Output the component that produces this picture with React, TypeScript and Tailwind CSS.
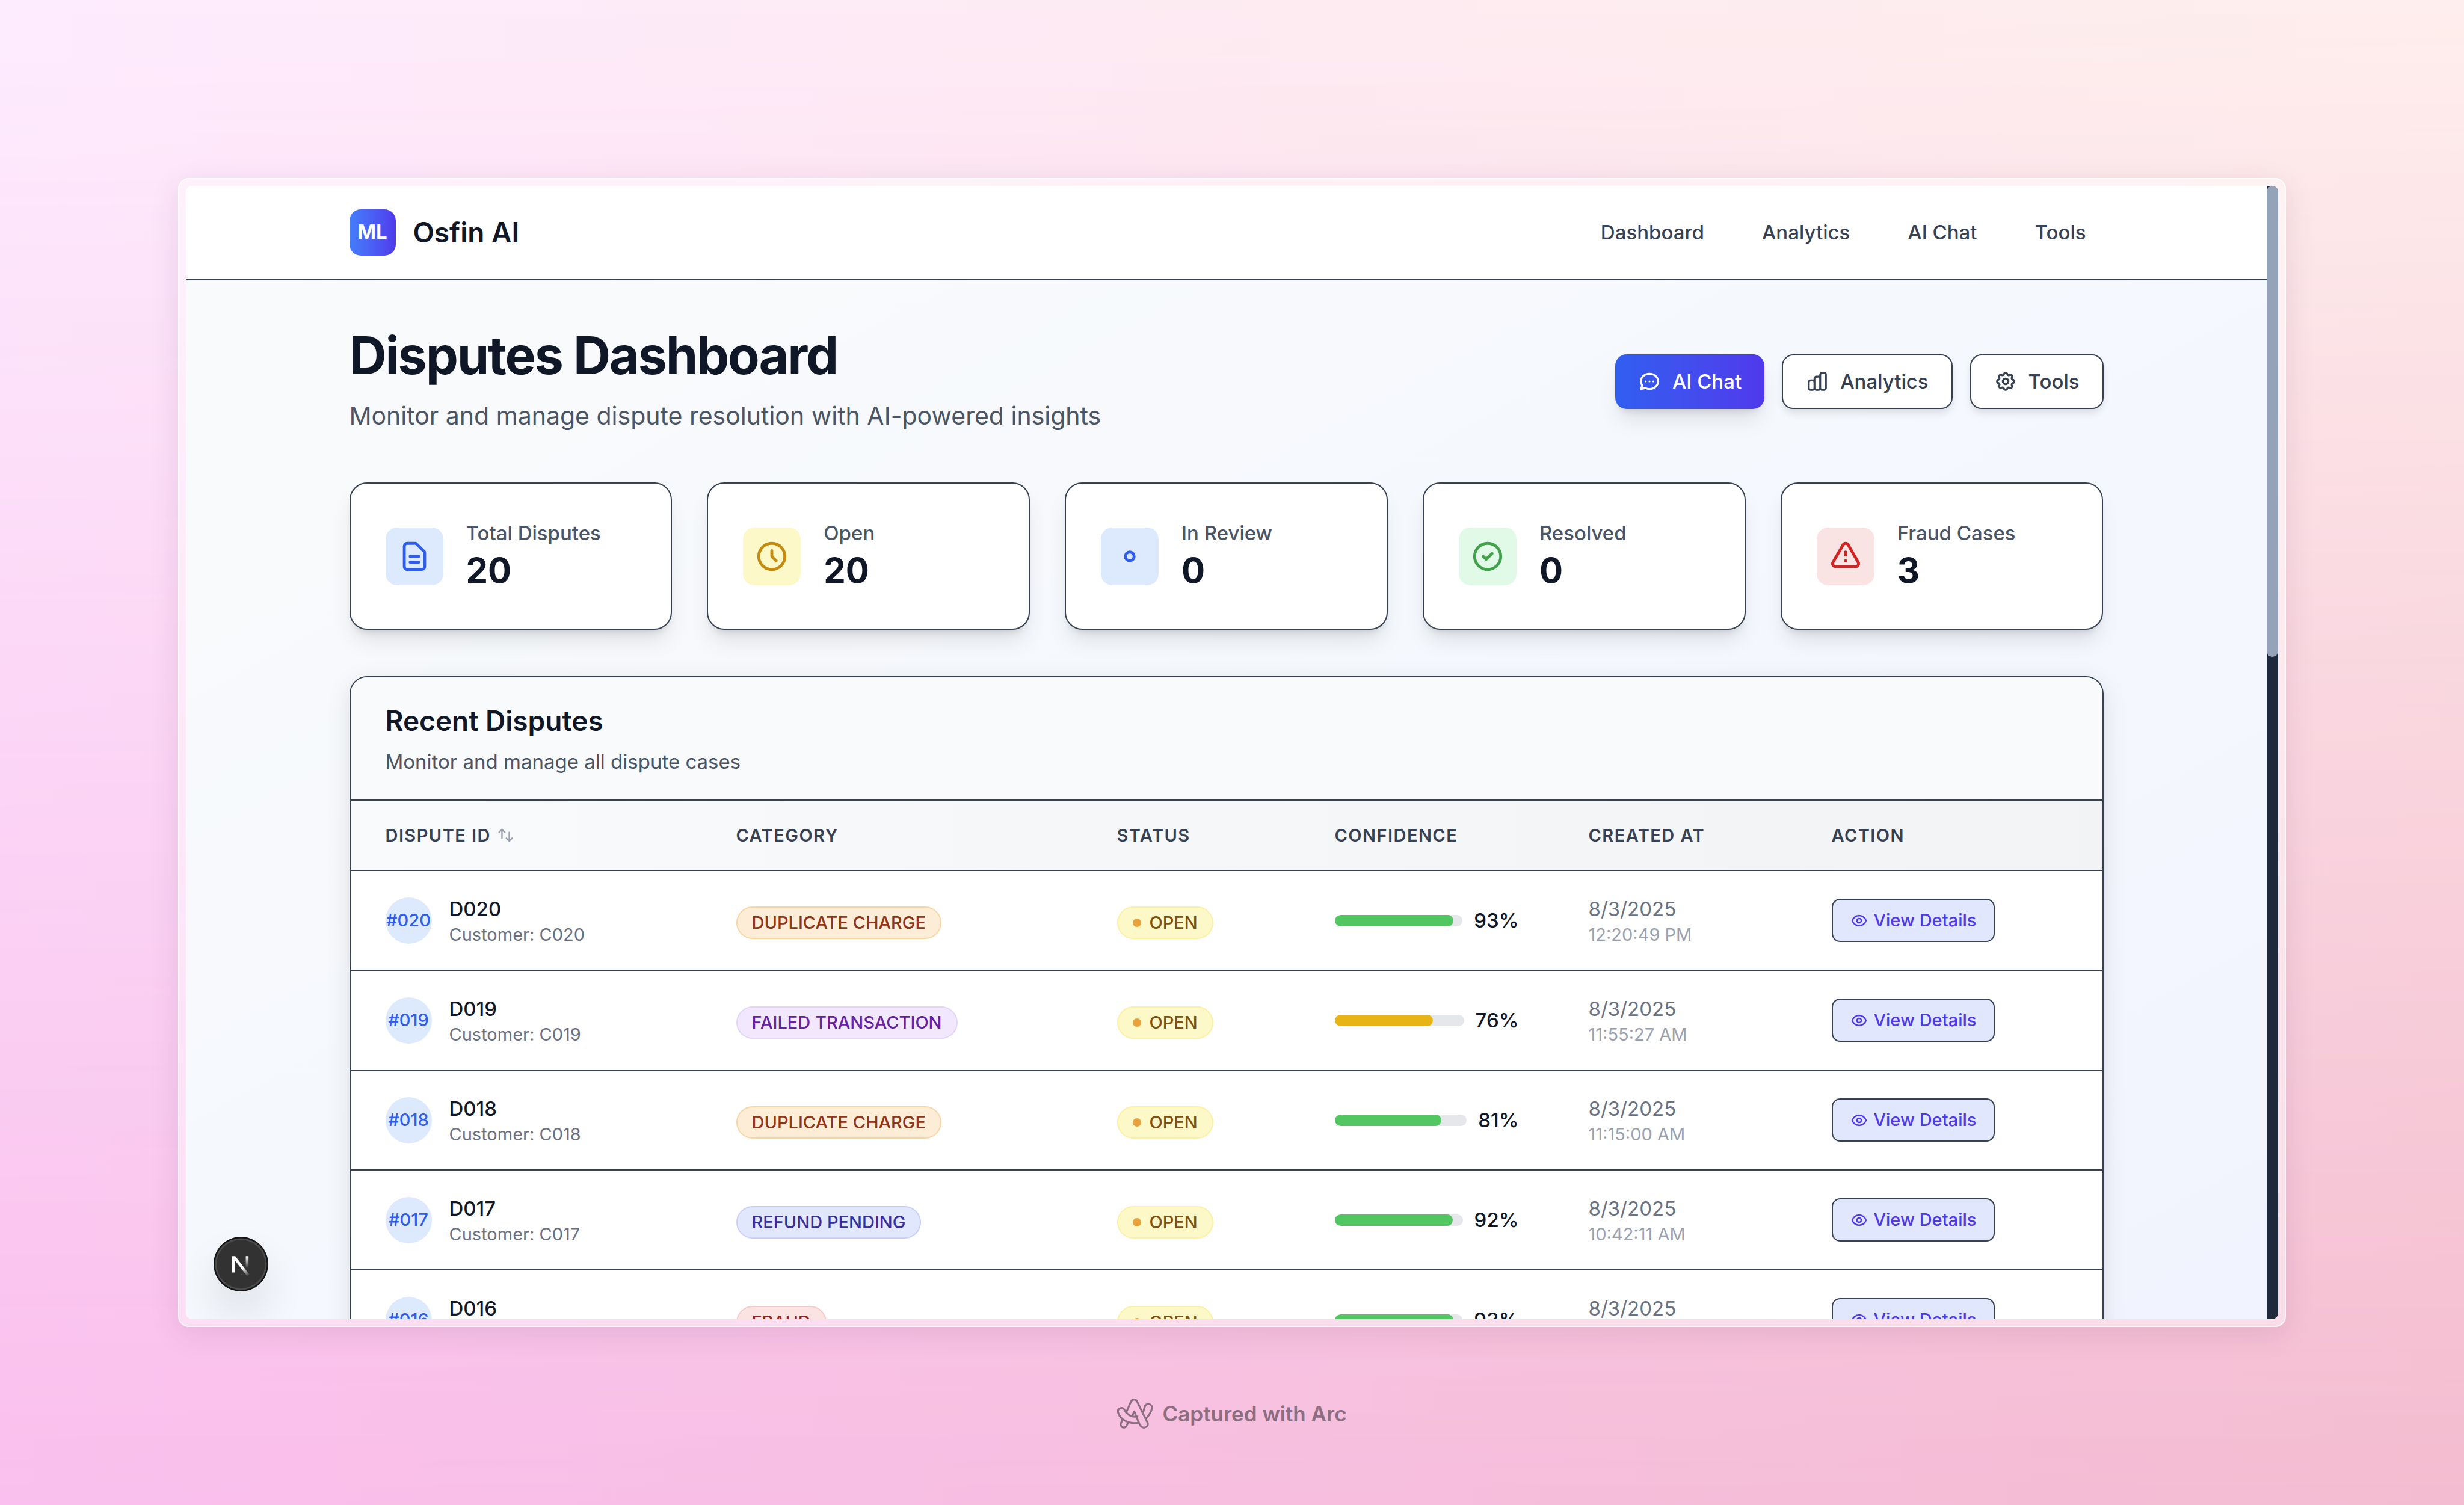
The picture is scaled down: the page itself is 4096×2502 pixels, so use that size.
import type { ReactNode } from "react";

const PATHS = {
  chat: "M8 12h.01M12 12h.01M16 12h.01M21 12c0 4.418-4.03 8-9 8a9.863 9.863 0 01-4.255-.949L3 20l1.395-3.72C3.512 15.042 3 13.574 3 12c0-4.418 4.03-8 9-8s9 3.582 9 8z",
  chart:
    "M9 19v-6a2 2 0 00-2-2H5a2 2 0 00-2 2v6a2 2 0 002 2h2a2 2 0 002-2zm0 0V9a2 2 0 012-2h2a2 2 0 012 2v10m-6 0a2 2 0 002 2h2a2 2 0 002-2m0 0V5a2 2 0 012-2h2a2 2 0 012 2v14a2 2 0 01-2 2h-2a2 2 0 01-2-2z",
  cog: "M10.325 4.317c.426-1.756 2.924-1.756 3.35 0a1.724 1.724 0 002.573 1.066c1.543-.94 3.31.826 2.37 2.37a1.724 1.724 0 001.065 2.572c1.756.426 1.756 2.924 0 3.35a1.724 1.724 0 00-1.066 2.573c.94 1.543-.826 3.31-2.37 2.37a1.724 1.724 0 00-2.572 1.065c-.426 1.756-2.924 1.756-3.35 0a1.724 1.724 0 00-2.573-1.066c-1.543.94-3.31-.826-2.37-2.37a1.724 1.724 0 00-1.065-2.572c-1.756-.426-1.756-2.924 0-3.35a1.724 1.724 0 001.066-2.573c-.94-1.543.826-3.31 2.37-2.37.996.608 2.296.07 2.572-1.065zM15 12a3 3 0 11-6 0 3 3 0 016 0z",
  file: "M9 12h6m-6 4h6m2 5H7a2 2 0 01-2-2V5a2 2 0 012-2h5.586a1 1 0 01.707.293l5.414 5.414a1 1 0 01.293.707V19a2 2 0 01-2 2z",
  clock: "M12 8v4l3 3m6-3a9 9 0 11-18 0 9 9 0 0118 0z",
  dot: "M15 12a3 3 0 11-6 0 3 3 0 016 0z",
  check: "M9 12l2 2 4-4m6 2a9 9 0 11-18 0 9 9 0 0118 0z",
  warning:
    "M12 9v2m0 4h.01m-6.938 4h13.856c1.54 0 2.502-1.667 1.732-3L13.732 4c-.77-1.333-2.694-1.333-3.464 0L3.34 16c-.77 1.333.192 3 1.732 3z",
  sort: "M7 16V4m0 0L3 8m4-4l4 4m6 0v12m0 0l4-4m-4 4l-4-4",
  eye: "M15 12a3 3 0 11-6 0 3 3 0 016 0zM2.458 12C3.732 7.943 7.523 5 12 5c4.478 0 8.268 2.943 9.542 7-1.274 4.057-5.064 7-9.542 7-4.477 0-8.268-2.943-9.542-7z",
};

function Icon({ name, className }: { name: keyof typeof PATHS; className: string }) {
  return (
    <svg
      className={className}
      viewBox="0 0 24 24"
      fill="none"
      stroke="currentColor"
      strokeWidth={2}
      strokeLinecap="round"
      strokeLinejoin="round"
      aria-hidden="true"
    >
      <path d={PATHS[name]} />
    </svg>
  );
}

const NAV = ["Dashboard", "Analytics", "AI Chat", "Tools"];

const STATS: { label: string; value: number; icon: keyof typeof PATHS; tone: string }[] = [
  { label: "Total Disputes", value: 20, icon: "file", tone: "bg-[#ddeafd] text-[#2f5eee]" },
  { label: "Open", value: 20, icon: "clock", tone: "bg-[#fdf8c8] text-[#c58a10]" },
  { label: "In Review", value: 0, icon: "dot", tone: "bg-[#ddeafd] text-[#2f5eee]" },
  { label: "Resolved", value: 0, icon: "check", tone: "bg-[#e1fae8] text-[#42a24c]" },
  { label: "Fraud Cases", value: 3, icon: "warning", tone: "bg-[#fae3e3] text-[#d42422]" },
];

const TONES = {
  orange: "bg-[#fdedd7] border-[#f8d5a4] text-[#913519]",
  purple: "bg-[#f2e8fd] border-[#e4d4fb] text-[#6622a2]",
  indigo: "bg-[#e1e7fd] border-[#c9cff9] text-[#37309c]",
  red: "bg-[#fbe3e2] border-[#f5cbc9] text-[#8f2220]",
};

const ROWS: {
  id: string;
  category: string;
  tone: keyof typeof TONES;
  confidence: number;
  time: string;
}[] = [
  { id: "020", category: "DUPLICATE CHARGE", tone: "orange", confidence: 93, time: "12:20:49 PM" },
  { id: "019", category: "FAILED TRANSACTION", tone: "purple", confidence: 76, time: "11:55:27 AM" },
  { id: "018", category: "DUPLICATE CHARGE", tone: "orange", confidence: 81, time: "11:15:00 AM" },
  { id: "017", category: "REFUND PENDING", tone: "indigo", confidence: 92, time: "10:42:11 AM" },
  { id: "016", category: "FRAUD", tone: "red", confidence: 93, time: "10:21:36 AM" },
];

function Header() {
  return (
    <header className="border-b-2 border-[#364153] bg-white">
      <div className="mx-auto flex h-[154px] w-full max-w-[2916px] items-center justify-between">
        <a href="#home" className="flex items-center gap-[29px]">
          <span className="flex size-[77px] items-center justify-center rounded-[19px] bg-linear-to-r from-[#437dfb] to-[#4f39ec] text-[33px] font-bold text-white">
            ML
          </span>
          <span className="text-[46px] leading-[67px] font-semibold text-[#101828]">Osfin AI</span>
        </a>
        <nav className="flex items-center gap-[38px]">
          {NAV.map((item) => (
            <a
              key={item}
              href={"#" + item.toLowerCase().replace(" ", "-")}
              className="px-[29px] py-5 text-[33px] leading-[48px] font-medium text-[#364153]"
            >
              {item}
            </a>
          ))}
        </nav>
      </div>
    </header>
  );
}

function OutlineButton({ icon, children }: { icon: keyof typeof PATHS; children: ReactNode }) {
  return (
    <button
      type="button"
      className="flex h-[91px] items-center gap-[19px] rounded-[19px] border-2 border-[#364153] bg-white px-[38px] text-[33px] leading-[48px] font-medium text-[#364153] shadow-[0_8px_14px_-2px_rgba(0,0,0,0.12)]"
    >
      <Icon name={icon} className="size-[38px]" />
      {children}
    </button>
  );
}

function Hero() {
  return (
    <div className="flex items-center justify-between">
      <div>
        <h1 className="text-[86px] leading-[96px] font-bold tracking-tight text-[#101828]">
          Disputes Dashboard
        </h1>
        <p className="mt-[19px] text-[41px] leading-[67px] text-[#4a5565]">
          Monitor and manage dispute resolution with AI-powered insights
        </p>
      </div>
      <div className="flex items-center gap-[29px]">
        <button
          type="button"
          className="flex h-[91px] items-center gap-[19px] rounded-[19px] bg-linear-to-r from-[#2f5ef0] to-[#4f39ec] px-[38px] text-[33px] leading-[48px] font-medium text-white shadow-[0_24px_36px_-7px_rgba(0,0,0,0.1),0_10px_14px_-8px_rgba(0,0,0,0.14)]"
        >
          <Icon name="chat" className="size-[38px]" />
          AI Chat
        </button>
        <OutlineButton icon="chart">Analytics</OutlineButton>
        <OutlineButton icon="cog">Tools</OutlineButton>
      </div>
    </div>
  );
}

function Stats() {
  return (
    <div className="grid grid-cols-5 gap-[58px]">
      {STATS.map((s) => (
        <div
          key={s.label}
          className="flex items-center gap-[38px] rounded-[29px] border-2 border-[#364153] bg-white px-[58px] py-[58px] shadow-[0_24px_36px_-7px_rgba(0,0,0,0.1),0_10px_14px_-8px_rgba(0,0,0,0.14)]"
        >
          <div className={"flex size-[96px] items-center justify-center rounded-[19px] " + s.tone}>
            <Icon name={s.icon} className="size-[58px]" />
          </div>
          <div>
            <p className="text-[33px] leading-[48px] font-medium text-[#4a5565]">{s.label}</p>
            <p className="text-[58px] leading-[77px] font-bold text-[#101828]">{s.value}</p>
          </div>
        </div>
      ))}
    </div>
  );
}

function DisputeTable() {
  const th = "h-[116px] px-[58px] text-left text-[29px] leading-[38px] font-semibold tracking-wider text-[#364153]";
  const pill = "inline-flex items-center rounded-full border-2 px-6 py-[6px] text-[29px] leading-[38px] font-medium ";
  return (
    <section className="overflow-hidden rounded-t-[29px] border-2 border-b-0 border-[#364153] bg-white shadow-[0_10px_40px_0_rgba(0,0,0,0.1)]">
      <div className="border-b-2 border-[#364153] bg-[#f9fafc] px-[58px] py-[39px]">
        <h2 className="text-[46px] leading-[67px] font-semibold text-[#101828]">Recent Disputes</h2>
        <p className="mt-[10px] text-[33px] leading-[48px] text-[#4a5565]">
          Monitor and manage all dispute cases
        </p>
      </div>
      <table className="w-full table-fixed border-collapse">
        <colgroup>
          <col className="w-[583px]" />
          <col className="w-[633px]" />
          <col className="w-[362px]" />
          <col className="w-[422px]" />
          <col className="w-[404px]" />
          <col className="w-[508px]" />
        </colgroup>
        <thead className="border-b-2 border-[#364153] bg-linear-to-r from-[#f9fafb] to-[#f2f3f5]">
          <tr>
            <th className={th}>
              <button type="button" className="flex items-center gap-[10px] font-semibold tracking-wider">
                DISPUTE ID
                <Icon name="sort" className="size-[29px] text-[#99a1af]" />
              </button>
            </th>
            <th className={th}>CATEGORY</th>
            <th className={th}>STATUS</th>
            <th className={th}>CONFIDENCE</th>
            <th className={th}>CREATED AT</th>
            <th className={th}>ACTION</th>
          </tr>
        </thead>
        <tbody>
          {ROWS.map((r) => (
            <tr key={r.id} className="h-[166px] border-b-2 border-[#364153]">
              <td className="px-[58px]">
                <div className="flex items-center gap-[29px]">
                  <span className="flex size-[77px] shrink-0 items-center justify-center rounded-full bg-[#ddeafd] text-[29px] font-medium text-[#2f5eee]">
                    {"#" + r.id}
                  </span>
                  <div>
                    <p className="text-[33px] leading-[48px] font-medium text-[#101828]">{"D" + r.id}</p>
                    <p className="text-[29px] leading-[38px] text-[#6a7282]">{"Customer: C" + r.id}</p>
                  </div>
                </div>
              </td>
              <td className="px-[58px] pt-2">
                <span className={pill + TONES[r.tone]}>{r.category}</span>
              </td>
              <td className="px-[58px] pt-2">
                <span className={pill + "border-[#fcf0a2] bg-[#fdf8c8] text-[#80500f]"}>
                  <span className="mr-[14px] size-[14px] rounded-full bg-[#e9a23b]" />
                  OPEN
                </span>
              </td>
              <td className="px-[58px]">
                <div className="flex items-center gap-[19px]">
                  <div
                    role="progressbar"
                    aria-label={"Confidence for D" + r.id}
                    aria-valuenow={r.confidence}
                    className="h-[19px] flex-1 overflow-hidden rounded-full bg-[#e5e7eb]"
                  >
                    <div
                      className={"h-full rounded-full " + (r.confidence >= 80 ? "bg-[#52c661]" : "bg-[#e7b416]")}
                      style={{ width: r.confidence + "%" }}
                    />
                  </div>
                  <span className="text-[33px] leading-[48px] font-medium text-[#101828]">
                    {r.confidence}%
                  </span>
                </div>
              </td>
              <td className="px-[58px]">
                <p className="text-[33px] leading-[48px] text-[#6a7282]">8/3/2025</p>
                <p className="text-[29px] leading-[38px] text-[#99a1af]">{r.time}</p>
              </td>
              <td className="px-[58px]">
                <button
                  type="button"
                  className="flex h-[72px] items-center gap-[10px] rounded-[14px] border-2 border-[#364153] bg-[#e1e7fd] px-[29px] text-[29px] leading-[38px] font-medium whitespace-nowrap text-[#4f39ec]"
                >
                  <Icon name="eye" className="size-[29px]" />
                  View Details
                </button>
              </td>
            </tr>
          ))}
        </tbody>
      </table>
    </section>
  );
}

function DevBadge() {
  return (
    <button
      type="button"
      aria-label="Open developer tools"
      className="absolute bottom-[46px] left-[46px] size-[91px] rounded-full shadow-[0_38px_60px_10px_rgba(0,0,0,0.07)]"
    >
      <svg viewBox="0 0 338 338" className="size-full" fill="none" aria-hidden="true">
        <defs>
          <linearGradient id="stem" x1="0" y1="120" x2="0" y2="194" gradientUnits="userSpaceOnUse">
            <stop offset="0" stopColor="#fff" />
            <stop offset="1" stopColor="#fff" stopOpacity="0" />
          </linearGradient>
          <linearGradient id="diagonal" x1="180" y1="192" x2="218" y2="242" gradientUnits="userSpaceOnUse">
            <stop offset="0" stopColor="#fff" />
            <stop offset="1" stopColor="#fff" stopOpacity="0" />
          </linearGradient>
        </defs>
        <circle cx="169" cy="169" r="169" fill="#151515" />
        <circle cx="169" cy="169" r="160" fill="#4c4c4c" />
        <circle cx="169" cy="169" r="150" fill="#323232" />
        <path d="M114 120h20l88 114-14 10-76-98v75h-18z" fill="url(#diagonal)" />
        <path d="M199 120h17v74h-17z" fill="url(#stem)" />
      </svg>
    </button>
  );
}

function ArcLogo() {
  return (
    <svg
      viewBox="0 0 75 62"
      className="h-[50px] w-[60px]"
      fill="none"
      stroke="currentColor"
      strokeWidth="4"
      strokeLinejoin="round"
      strokeLinecap="round"
      aria-hidden="true"
    >
      <path d="M18.8 28.6 28.8 6.2C31.4.5 39-.1 41.6 6.2L63.3 50.2C66.5 58 55 63.500 49.500 57.300 47.500 54.500 45.800 51.500 44.600 48.500L35.700 26.500 31 36.500" />
      <path d="M42 37C32.500 39 23.500 35 18.800 28.600L15 22.800C10.500 16.400 0 20 1.900 28.400 5.500 42.500 23 54 44.800 49.700" />
      <path d="M11.500 43.500 7.800 51C4.800 59 16 63.500 19.600 56.300L23.200 49" />
      <path d="M53.200 29.500C55.200 26 56 21.500 57.200 17.500 59.500 7.500 73.500 10.300 72.500 19.500 71 27.500 66 35 60.200 41" />
    </svg>
  );
}

export default function App() {
  return (
    <div
      className="relative flex h-screen flex-col bg-linear-to-r from-[#fabfee] to-[#f4bcd0] px-[296px] pt-[296px] antialiased"
      style={{ fontFamily: '"Inter", "Liberation Sans", sans-serif' }}
    >
      <div className="absolute inset-0 bg-linear-to-r from-[#fdecfe] via-[#fdebf2] to-[#feeeec] [mask-image:linear-gradient(to_bottom,black,transparent)]" />
      <div className="relative flex min-h-0 flex-1 rounded-[18px] border-2 border-white/70 bg-white/45 p-[11px] shadow-[0_12px_50px_0_rgba(60,20,60,0.1)]">
        <div className="relative flex min-w-0 flex-1 overflow-hidden rounded-[10px]">
          <div className="min-w-0 flex-1 overflow-hidden bg-linear-to-br from-[#f9fafb] via-[#f5f8fd] to-[#f1f4fe]">
            <Header />
            <main className="mx-auto flex w-full max-w-[2916px] flex-col gap-[77px] pt-[78px]">
              <Hero />
              <Stats />
              <DisputeTable />
            </main>
          </div>
          <div className="w-[19px] bg-[#1e293b]">
            <div className="h-[783px] rounded-full bg-[#94a3b8]" />
          </div>
          <DevBadge />
        </div>
      </div>
      <footer className="relative flex h-[296px] shrink-0 items-center justify-center gap-[15px] pb-[8px] text-[35px] font-semibold text-[#8c6e80]">
        <ArcLogo />
        Captured with Arc
      </footer>
    </div>
  );
}
